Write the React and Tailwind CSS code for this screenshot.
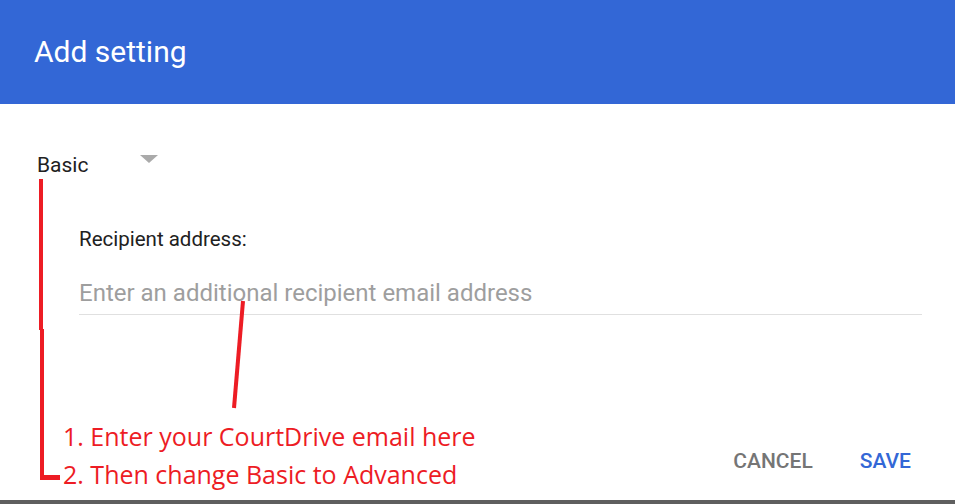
import React from 'react';

const roboto = { fontFamily: 'Roboto, "Liberation Sans", sans-serif' };

const Annotations = () => (
    <svg className="absolute inset-0 pointer-events-none" width="955" height="504" viewBox="0 0 955 504">
        <g fill="#ed1c24">
            <rect x="39" y="179" width="4" height="151" />
            <rect x="40" y="329" width="4" height="151" />
            <rect x="40" y="475" width="20" height="5" />
        </g>
        <line x1="243" y1="301" x2="234" y2="408" stroke="#ed1c24" strokeWidth="4" />
    </svg>
);

export default function App() {
    return (
        <div className="relative w-[955px] h-[504px] bg-white overflow-hidden flex flex-col" style={roboto}>
            <header className="h-[104px] bg-[#3367d6] flex items-center px-[34px] shrink-0">
                <h1 className="text-[30px] text-white font-[Roboto] leading-none">Add setting</h1>
            </header>

            <div className="flex-1 flex flex-col">
                <div className="pl-[37px] pt-[48px] flex items-start">
                    <span className="text-[21px] leading-[26px] text-[#212121] font-[Roboto]">Basic</span>
                    <span className="ml-[52px] mt-[3px] w-0 h-0 border-l-[9px] border-r-[9px] border-t-[8px] border-l-transparent border-r-transparent border-t-[#aaaaaa]" />
                </div>

                <div className="pl-[79px] pr-[33px] pt-[48px]">
                    <div className="text-[20.5px] leading-[26px] text-[#212121] font-[Roboto]">Recipient address:</div>
                    <div className="mt-[26px] border-b border-[#e0e0e0] pb-[6px]">
                        <input
                            type="email"
                            placeholder="Enter an additional recipient email address"
                            className="block w-full h-[30px] text-[24px] leading-[30px] font-[Roboto] text-[#212121] placeholder:text-[#9e9e9e] outline-none bg-transparent"
                        />
                    </div>
                </div>

                <div className="mt-[102px] flex items-start justify-between pl-[63px] pr-[44px]">
                    <div
                        className="text-[25px] leading-[38px] text-[#ed1c24]"
                        style={{ fontFamily: '"Open Sans", "Noto Sans", sans-serif' }}
                    >
                        <div>1. Enter your CourtDrive email here</div>
                        <div>2. Then change Basic to Advanced</div>
                    </div>
                    <div className="flex items-center gap-[47px] mt-[32px]">
                        <button className="text-[21px] leading-[24px] font-medium text-[#757575] uppercase font-[Roboto]">Cancel</button>
                        <button className="text-[21px] leading-[24px] font-medium text-[#3367d6] uppercase font-[Roboto]">Save</button>
                    </div>
                </div>
            </div>

            <div className="h-[4px] bg-[#5f5f5f] shrink-0" />
            <Annotations />
        </div>
    );
}
